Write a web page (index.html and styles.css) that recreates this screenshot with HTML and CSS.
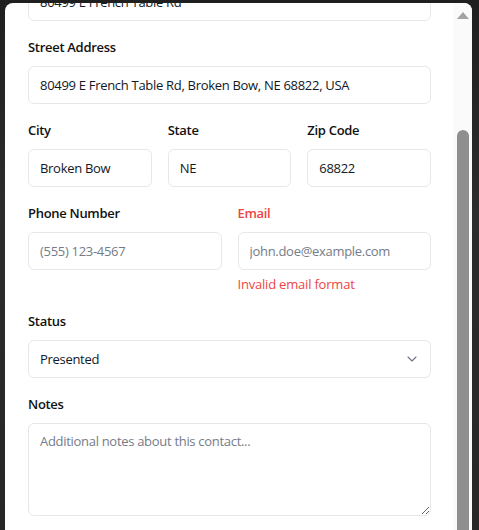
FILE: index.html
```html
<!DOCTYPE html>
<html lang="en">
<head>
<meta charset="utf-8">
<title>Edit Contact</title>
<link rel="stylesheet" href="styles.css">
</head>
<body>
<div class="backdrop">
  <div class="modal">
    <div class="viewport">
      <form class="form">
        <div class="field field-cut">
          <input class="input" type="text" value="80499 E French Table Rd">
        </div>
        <div class="field">
          <label class="label">Street Address</label>
          <input class="input" type="text" value="80499 E French Table Rd, Broken Bow, NE 68822, USA">
        </div>
        <div class="row row-3">
          <div class="field">
            <label class="label">City</label>
            <input class="input" type="text" value="Broken Bow">
          </div>
          <div class="field">
            <label class="label">State</label>
            <input class="input" type="text" value="NE">
          </div>
          <div class="field">
            <label class="label">Zip Code</label>
            <input class="input" type="text" value="68822">
          </div>
        </div>
        <div class="row row-2">
          <div class="field">
            <label class="label">Phone Number</label>
            <input class="input" type="text" placeholder="(555) 123-4567">
          </div>
          <div class="field">
            <label class="label label-error">Email</label>
            <input class="input" type="text" placeholder="john.doe@example.com">
            <p class="error">Invalid email format</p>
          </div>
        </div>
        <div class="field">
          <label class="label">Status</label>
          <div class="select">
            <span>Presented</span>
            <svg class="chevron" width="16" height="16" viewBox="0 0 24 24" fill="none" stroke="currentColor" stroke-width="1.6" stroke-linecap="round" stroke-linejoin="round"><path d="m6 9 6 6 6-6"/></svg>
          </div>
        </div>
        <div class="field">
          <label class="label">Notes</label>
          <textarea class="textarea" placeholder="Additional notes about this contact..."></textarea>
        </div>
      </form>
    </div>
    <div class="scrollbar">
      <div class="arrow"></div>
      <div class="thumb"></div>
    </div>
  </div>
</div>
</body>
</html>
```
FILE: styles.css
```css
* { box-sizing: border-box; }
html, body {
  margin: 0;
  height: 530px;
  overflow: hidden;
}
body {
  background: #242424;
  font-family: "Open Sans", "Noto Sans", sans-serif;
  color: #111827;
}
.backdrop {
  height: 530px;
  padding: 3px 7px 0 5px;
  background: linear-gradient(180deg, #1f1f1f 0%, #2c2c2c 40%, #262626 100%);
}
.modal {
  height: 527px;
  background: #ffffff;
  border-radius: 8px 8px 0 0;
  display: flex;
  overflow: hidden;
}
.viewport {
  flex: 1;
  overflow: hidden;
  padding: 0 22px 0 23px;
}
.form {
  margin: -20px 0 0;
  display: flex;
  flex-direction: column;
  gap: 16px;
}
.field {
  display: flex;
  flex-direction: column;
  min-width: 0;
}
.row {
  display: grid;
  gap: 16px;
}
.row-3 { grid-template-columns: repeat(3, 1fr); }
.row-2 { grid-template-columns: repeat(2, 1fr); }
.label {
  font-size: 13px;
  font-weight: 600;
  line-height: 21px;
  letter-spacing: -0.3px;
  margin-bottom: 8px;
  color: #111111;
}
.label-error { color: #ef4444; }
.input, .select, .textarea {
  font-family: inherit;
  font-size: 13px;
  letter-spacing: -0.3px;
  color: #111827;
  border: 1px solid #e5e7eb;
  border-radius: 6px;
  background: #ffffff;
  outline: none;
  width: 100%;
}
.input {
  height: 38px;
  padding: 0 11px;
}
.input::placeholder, .textarea::placeholder { color: #757c88; }
.error {
  margin: 4px 0 0;
  font-size: 13px;
  line-height: 21px;
  letter-spacing: -0.2px;
  color: #ef4444;
}
.select {
  height: 38px;
  padding: 0 10px 0 11px;
  display: flex;
  align-items: center;
  justify-content: space-between;
}
.chevron { color: #6b7280; }
.textarea {
  height: 93px;
  padding: 7px 11px;
  line-height: 20px;
  resize: vertical;
  display: block;
}
.scrollbar {
  width: 19px;
  background: #fafafa;
  display: flex;
  flex-direction: column;
  align-items: center;
}
.arrow {
  margin-top: 9px;
  width: 0;
  height: 0;
  border-left: 6px solid transparent;
  border-right: 6px solid transparent;
  border-bottom: 7px solid #a3a3a3;
}
.thumb {
  margin-top: 111px;
  width: 12px;
  flex: 1;
  background: #8f8f8f;
  border-radius: 6px 6px 0 0;
}
```
